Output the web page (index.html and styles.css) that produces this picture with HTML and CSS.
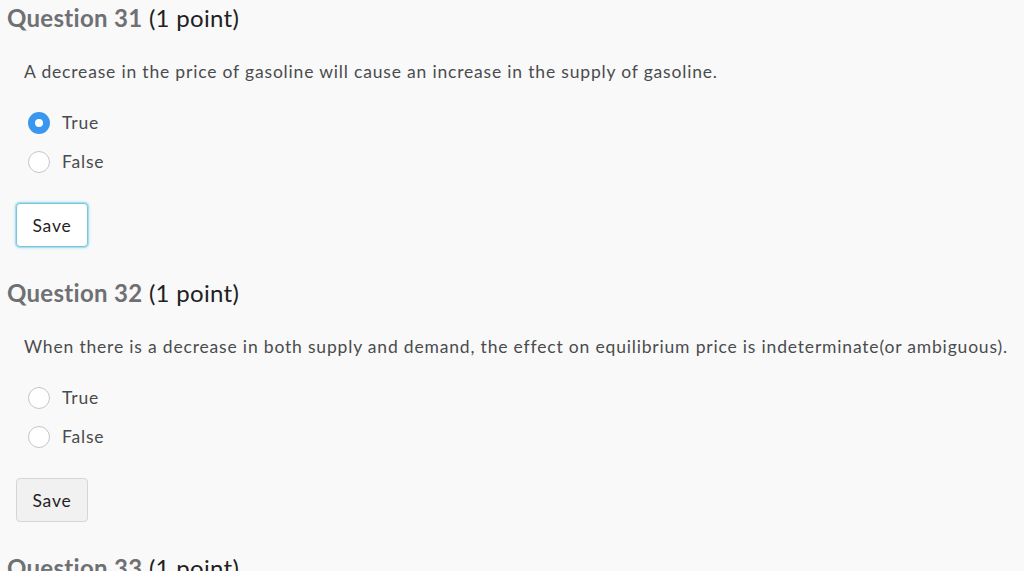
FILE: index.html
```html
<!DOCTYPE html>
<html lang="en">
<head>
    <meta charset="UTF-8">
    <meta name="viewport" content="width=device-width, initial-scale=1.0">
    <title>Quiz</title>
<link rel="stylesheet" href="styles.css">
</head>
<body>
    <div class="quiz">
        <!-- one block per question: heading, stem, choices, save -->
        <section class="question">
            <h2 class="q-title"><strong>Question 31</strong> (1 point)</h2>
            <p class="q-text">A decrease in the price of gasoline will cause an increase in the supply of gasoline.</p>
            <div class="choices">
                <label class="choice"><span class="radio checked"></span>True</label>
                <label class="choice"><span class="radio"></span>False</label>
            </div>
            <button class="save focused">Save</button>
        </section>

        <section class="question">
            <h2 class="q-title"><strong>Question 32</strong> (1 point)</h2>
            <p class="q-text">When there is a decrease in both supply and demand, the effect on equilibrium price is indeterminate(or ambiguous).</p>
            <div class="choices">
                <label class="choice"><span class="radio"></span>True</label>
                <label class="choice"><span class="radio"></span>False</label>
            </div>
            <button class="save">Save</button>
        </section>

        <section class="question">
            <h2 class="q-title"><strong>Question 33</strong> (1 point)</h2>
        </section>
    </div>
</body>
</html>
```

FILE: styles.css
```css
* {
    margin: 0;
    padding: 0;
    box-sizing: border-box;
}

body {
    background-color: #f9f9f9;
    font-family: Lato, "Open Sans", sans-serif;
    color: #494c4e;
    overflow: hidden;
}

.quiz {
    padding: 3px 0 0 7px;
}

.question {
    height: 275px;
}

.q-title {
    font-size: 24px;
    font-weight: normal;
    line-height: 30px;
    letter-spacing: 0.3px;
    color: #202122;
}

.q-title strong {
    color: #6e7073;
    font-weight: bold;
}

.q-text {
    margin: 27px 0 0 17px;
    font-size: 17.5px;
    line-height: 24px;
    letter-spacing: 0.82px;
}

.choices {
    margin: 27px 0 0 21px;
    display: flex;
    flex-direction: column;
    gap: 16px;
}

.choice {
    display: flex;
    align-items: center;
    gap: 12px;
    font-size: 17.5px;
    line-height: 23px;
    letter-spacing: 0.8px;
}

.radio {
    width: 22px;
    height: 22px;
    border-radius: 50%;
    border: 1px solid #c4c6c8;
    background-color: #fff;
}

.radio.checked {
    border: 7px solid #3a97f0;
    background-color: #fff;
}

.save {
    margin: 30px 0 0 9px;
    width: 72px;
    height: 44px;
    font-family: inherit;
    font-size: 17.5px;
    letter-spacing: 0.8px;
    color: #1f1f1f;
    background-color: #f1f1f1;
    border: 1px solid #d3d5d7;
    border-radius: 4px;
}

.save.focused {
    background-color: #fff;
    border-color: #79c7dc;
    box-shadow: 0 0 0 1px #a9ddec, 0 0 3px 1px #b7e3ef;
}
```
